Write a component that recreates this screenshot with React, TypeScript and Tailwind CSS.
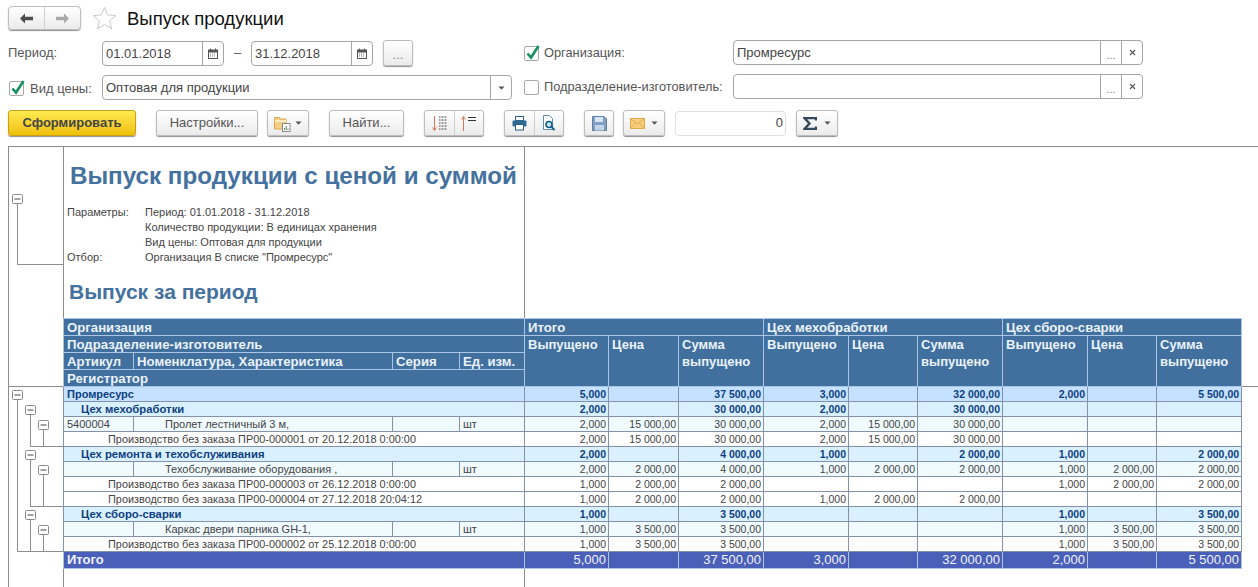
import React from "react";

const FONT = "font-['Liberation_Sans',Arial,sans-serif]";
const BTN = "flex items-center justify-center h-[26px] border border-[#bdbdbd] rounded-[3px] bg-gradient-to-b from-white to-[#ebebeb] shadow-[0_1px_1px_#8f8f8f] text-[#555] text-[13px]";
const FIELD = "flex items-stretch border border-[#a6a6a6] rounded-[4px] bg-white text-[13px] text-[#444]";

function Caret() {
  return <svg width="7" height="4" viewBox="0 0 7 4"><path d="M0.5 0.5h6L3.5 3.7z" fill="#555" /></svg>;
}
function Check({ on }: { on: boolean }) {
  return (
    <span className="relative block w-[15px] h-[15px] border border-[#a8a8a8] rounded-[2px] bg-white shrink-0">
      {on && (
        <svg className="absolute left-[0px] top-[-4px]" width="16" height="18" viewBox="0 0 16 18">
          <path d="M2.5 10.5l3.5 4 7.5-11.5" fill="none" stroke="#17915f" strokeWidth="2.6" />
        </svg>
      )}
    </span>
  );
}
function Cal() {
  return (
    <span className="w-[21px] flex items-center justify-center border-l border-[#a6a6a6]">
      <svg width="10" height="11" viewBox="0 0 10 11">
        <rect x="0.5" y="2" width="9" height="8.5" fill="#fff" stroke="#555" />
        <rect x="0.5" y="2" width="9" height="2.5" fill="#555" />
        <path d="M2.5 0.5v2M7.5 0.5v2" stroke="#555" />
        <path d="M2 6h6M2 8h6" stroke="#777" strokeDasharray="1 1" />
      </svg>
    </span>
  );
}
function Dots() {
  return <span className="w-[21px] flex items-end justify-center border-l border-[#a6a6a6] text-[11px] leading-[18px] text-[#777]">...</span>;
}
function Cross() {
  return (
    <span className="w-[21px] flex items-center justify-center border-l border-[#a6a6a6]">
      <svg width="7" height="7" viewBox="0 0 7 7"><path d="M1 1l5 5M6 1l-5 5" stroke="#555" strokeWidth="1.1" /></svg>
    </span>
  );
}
function OrgField({ value }: { value: string }) {
  return (
    <div className={`${FIELD} h-[25px] self-start w-[410px]`}>
      <span className="flex-1 pl-[3px] leading-[23px]">{value}</span>
      <Dots />
      <Cross />
    </div>
  );
}

type Row = { kind: "org" | "group" | "item" | "reg"; a?: string; n?: string; t: string; v: string[] };
const rows: Row[] = [
  { kind: "org", t: "Промресурс", v: ["5,000", "", "37 500,00", "3,000", "", "32 000,00", "2,000", "", "5 500,00"] },
  { kind: "group", t: "Цех мехобработки", v: ["2,000", "", "30 000,00", "2,000", "", "30 000,00", "", "", ""] },
  { kind: "item", a: "5400004", t: "Пролет лестничный 3 м,", v: ["2,000", "15 000,00", "30 000,00", "2,000", "15 000,00", "30 000,00", "", "", ""] },
  { kind: "reg", t: "Производство без заказа ПР00-000001 от 20.12.2018 0:00:00", v: ["2,000", "15 000,00", "30 000,00", "2,000", "15 000,00", "30 000,00", "", "", ""] },
  { kind: "group", t: "Цех ремонта и техобслуживания", v: ["2,000", "", "4 000,00", "1,000", "", "2 000,00", "1,000", "", "2 000,00"] },
  { kind: "item", t: "Техобслуживание оборудования ,", v: ["2,000", "2 000,00", "4 000,00", "1,000", "2 000,00", "2 000,00", "1,000", "2 000,00", "2 000,00"] },
  { kind: "reg", t: "Производство без заказа ПР00-000003 от 26.12.2018 0:00:00", v: ["1,000", "2 000,00", "2 000,00", "", "", "", "1,000", "2 000,00", "2 000,00"] },
  { kind: "reg", t: "Производство без заказа ПР00-000004 от 27.12.2018 20:04:12", v: ["1,000", "2 000,00", "2 000,00", "1,000", "2 000,00", "2 000,00", "", "", ""] },
  { kind: "group", t: "Цех сборо-сварки", v: ["1,000", "", "3 500,00", "", "", "", "1,000", "", "3 500,00"] },
  { kind: "item", t: "Каркас двери парника GH-1,", v: ["1,000", "3 500,00", "3 500,00", "", "", "", "1,000", "3 500,00", "3 500,00"] },
  { kind: "reg", t: "Производство без заказа ПР00-000002 от 25.12.2018 0:00:00", v: ["1,000", "3 500,00", "3 500,00", "", "", "", "1,000", "3 500,00", "3 500,00"] },
];

const BG: Record<Row["kind"], string> = {
  org: "bg-[#c4e1ff]",
  group: "bg-[#d9f0ff]",
  item: "bg-[#effbff]",
  reg: "bg-white",
};
const TD = "border border-[#8491ab] h-[15px] p-0 leading-[14px] overflow-hidden whitespace-nowrap";
const TH = "border border-[#a9c6e8] p-0 pl-[3px] pt-[2px] text-left align-top text-[13.2px] leading-[14px] font-bold text-[#eaf2fa] overflow-hidden whitespace-nowrap";
const THS = "border border-[#a9c6e8] p-0 pl-[3px] text-left align-top text-[13px] leading-[17px] font-bold text-[#eaf2fa] overflow-hidden whitespace-nowrap";
const WIDTHS = [70, 259, 67, 65, 84, 70, 85, 85, 69, 85, 85, 69, 85];

function Box({ x, y }: { x: number; y: number }) {
  return (
    <g>
      <rect x={x + 0.5} y={y + 0.5} width="10" height="9" rx="1" fill="#fff" stroke="#8a8a8a" />
      <path d={`M${x + 2.5} ${y + 5}h6`} stroke="#444" />
    </g>
  );
}

function Gutter() {
  const lines = "M8.5 57V117.5H54 M0 239.5H54 M8.5 253V404.5H54 M21.5 267V299.5H54 M21.5 312V359.5H54 M21.5 372V404.5 M34.5 282V299.5 M34.5 327V359.5 M34.5 387V404.5";
  return (
    <svg width="54" height="441" viewBox="0 0 54 441" className="block">
      <path d={lines} fill="none" stroke="#8d8d8d" />
      <Box x={3} y={47} />
      <Box x={3} y={243} />
      <Box x={16} y={258} />
      <Box x={29} y={273} />
      <Box x={16} y={303} />
      <Box x={29} y={318} />
      <Box x={16} y={363} />
      <Box x={29} y={378} />
    </svg>
  );
}

export default function App() {
  return (
    <div className={`${FONT} w-[1258px] h-[587px] overflow-hidden bg-white flex flex-col`}>
      {/* Header */}
      <div className="flex items-center h-[24px] mt-[6px] ml-[8px]">
        <div className={`${BTN} !h-[24px] w-[73px] !rounded-[4px]`}>
          <span className="flex-1 flex items-center justify-center h-full border-r border-[#d0d0d0]">
            <svg width="15" height="11" viewBox="0 0 15 11"><path d="M6 0.5L1 5.5l5 5V7.3h8V3.7H6z" fill="#4c4c4c" /></svg>
          </span>
          <span className="flex-1 flex items-center justify-center h-full">
            <svg width="15" height="11" viewBox="0 0 15 11"><path d="M9 0.5l5 5-5 5V7.3H1V3.7h8z" fill="#a8a8a8" /></svg>
          </span>
        </div>
        <svg className="ml-[11px]" width="25" height="24" viewBox="0 0 25 24">
          <path d="M12.5 1.5l3.2 7.4 8 .7-6 5.3 1.8 7.8-7-4.1-7 4.1 1.8-7.8-6-5.3 8-.7z" fill="#fff" stroke="#c9c9c9" />
        </svg>
        <span className="ml-[10px] pt-[1px] text-[18.5px] text-[#111] leading-[24px]">Выпуск продукции</span>
      </div>

      {/* Row 1 */}
      <div className="flex items-center h-[26px] mt-[10px] ml-[8px] text-[13px] text-[#555]">
        <span className="w-[94px]">Период:</span>
        <div className={`${FIELD} h-[25px] self-end w-[122px]`}><span className="flex-1 pl-[3px] leading-[23px]">01.01.2018</span><Cal /></div>
        <span className="w-[27px] text-center">–</span>
        <div className={`${FIELD} h-[25px] self-end w-[122px]`}><span className="flex-1 pl-[3px] leading-[23px]">31.12.2018</span><Cal /></div>
        <div className={`${BTN} w-[30px] ml-[10px] !items-end text-[11px] leading-[20px] !text-[#888]`}>...</div>
        <div className="ml-[111px]"><Check on /></div>
        <span className="ml-[5px] w-[189px] text-[12.8px]">Организация:</span>
        <OrgField value="Промресурс" />
      </div>

      {/* Row 2 */}
      <div className="flex items-center h-[26px] mt-[8px] ml-[8px] text-[13px] text-[#555]">
        <div className="ml-[1px] mt-[3px]"><Check on /></div>
        <span className="ml-[6px] mt-[3px] w-[72px]">Вид цены:</span>
        <div className={`${FIELD} h-[25px] self-end w-[410px]`}>
          <span className="flex-1 pl-[3px] leading-[24px]">Оптовая для продукции</span>
          <span className="w-[21px] flex items-center justify-center border-l border-[#a6a6a6]"><Caret /></span>
        </div>
        <div className="ml-[12px]"><Check on={false} /></div>
        <span className="ml-[5px] w-[189px] whitespace-nowrap text-[12.8px]">Подразделение-изготовитель:</span>
        <OrgField value="" />
      </div>

      {/* Toolbar */}
      <div className="flex items-center h-[26px] mt-[10px] ml-[8px]">
        <div className={`${BTN} w-[128px] !border-[#c9a21a] !from-[#ffea4d] !to-[#f0c000] !text-[#444] font-bold text-[13.2px]`}>Сформировать</div>
        <div className={`${BTN} w-[102px] ml-[20px]`}>Настройки...</div>
        <div className={`${BTN} w-[42px] ml-[9px] gap-[4px]`}>
          <svg width="17" height="17" viewBox="0 0 17 17">
            <path d="M0.5 2.5h5l1 1.5h5.500v10H.5z" fill="#f5cf85" stroke="#dba650" />
            <path d="M1 6h11" stroke="#fbe9c2" strokeWidth="2" />
            <rect x="8.500" y="8.500" width="7.500" height="8" fill="#fff" stroke="#8a8a8a" />
            <path d="M10.500 15v-2M12.200 15v-4M14 15v-1.500" stroke="#5b8a5b" />
          </svg>
          <Caret />
        </div>
        <div className={`${BTN} w-[75px] ml-[20px]`}>Найти...</div>
        <div className={`${BTN} w-[60px] ml-[20px]`}>
          <span className="flex-1 h-full flex items-center justify-center border-r border-[#cfcfcf]">
            <svg width="17" height="17" viewBox="0 0 17 17">
              <path d="M3.500 1v14M1.500 12.500l2 3 2-3" fill="none" stroke="#d9765a" />
              <path d="M8 2h8M8 5h8M8 8h8M8 11h8M8 14h8" stroke="#444" strokeDasharray="1 0.5" />
            </svg>
          </span>
          <span className="flex-1 h-full flex items-center justify-center">
            <svg width="17" height="17" viewBox="0 0 17 17">
              <path d="M3.500 16V2M1.500 4.500l2-3 2 3" fill="none" stroke="#d9765a" />
              <path d="M8 2.500h8M8 5.500h8" stroke="#333" />
            </svg>
          </span>
        </div>
        <div className={`${BTN} w-[60px] ml-[20px]`}>
          <span className="flex-1 h-full flex items-center justify-center border-r border-[#cfcfcf]">
            <svg width="15" height="15" viewBox="0 0 15 15">
              <rect x="3.500" y="0.500" width="8" height="4" fill="#fff" stroke="#2f5f86" />
              <rect x="0.500" y="4.500" width="14" height="6" rx="1" fill="#2f6a96" />
              <rect x="3.500" y="8.500" width="8" height="5.500" fill="#fff" stroke="#2f5f86" />
            </svg>
          </span>
          <span className="flex-1 h-full flex items-center justify-center">
            <svg width="15" height="16" viewBox="0 0 15 16">
              <path d="M2.500 0.500h6l3 3v11h-9z" fill="#fff" stroke="#5f8fae" />
              <circle cx="8" cy="9.500" r="3" fill="#cfe6f2" stroke="#0f5f86" strokeWidth="1.6" />
              <path d="M10 11.500l3.500 3.500" stroke="#0f5f86" strokeWidth="2" />
            </svg>
          </span>
        </div>
        <div className={`${BTN} w-[30px] ml-[20px]`}>
          <svg width="15" height="15" viewBox="0 0 15 15">
            <path d="M0.500 0.500h11.500l2.500 2.500v11.500H.5z" fill="#7f9fc4" stroke="#5f7fa5" />
            <rect x="3" y="1" width="8" height="5" fill="#dbe6f2" />
            <rect x="3" y="9" width="9" height="5.500" fill="#c4d4e6" />
          </svg>
        </div>
        <div className={`${BTN} w-[42px] ml-[9px] gap-[6px]`}>
          <svg width="15" height="11" viewBox="0 0 15 11">
            <rect x="0.500" y="0.500" width="14" height="10" fill="#f7cf7e" stroke="#e0a94c" />
            <path d="M0.500 0.500l7 5.500 7-5.500M0.500 10.500l5-5.500M14.500 10.500l-5-5.500" fill="none" stroke="#e0a94c" />
          </svg>
          <Caret />
        </div>
        <div className="flex items-center justify-end w-[111px] h-[25px] ml-[10px] pr-[2px] border border-[#dedede] rounded-[4px] text-[13px] text-[#444]">0</div>
        <div className={`${BTN} w-[42px] ml-[10px] gap-[7px]`}>
          <svg width="14" height="13" viewBox="0 0 14 13"><path d="M13 3.500V1H1.500l5 5.500-5 5.500H13V9.500" fill="none" stroke="#344a5c" strokeWidth="2.400" /></svg>
          <Caret />
        </div>
      </div>

      {/* Report */}
      <div className="flex flex-1 mt-[10px] ml-[8px] border-t border-l border-[#8d8d8d] min-h-0 overflow-hidden">
        <div className="w-[54px] shrink-0">
          <Gutter />
        </div>
        <div className="flex flex-col flex-1">
          <div className="w-[462px] h-[171px] border-l border-r border-[#8d8d8d] shrink-0 pl-[6px] overflow-hidden whitespace-nowrap">
            <div className="mt-[14px] text-[24.2px] leading-[30px] font-bold text-[#44719e]">Выпуск продукции с ценой и суммой</div>
            <div className="mt-[14px] ml-[-3px] flex text-[11px] leading-[15px] text-[#444]">
              <div className="w-[78px]"><div>Параметры:</div><div className="mt-[30px]">Отбор:</div></div>
              <div>
                <div>Период: 01.01.2018 - 31.12.2018</div>
                <div>Количество продукции: В единицах хранения</div>
                <div>Вид цены: Оптовая для продукции</div>
                <div>Организация В списке "Промресурс"</div>
              </div>
            </div>
            <div className="mt-[15px] ml-[-1px] text-[21px] leading-[24px] font-bold text-[#44719e]">Выпуск за период</div>
          </div>
          <div className="flex shrink-0">
            <table className="table-fixed border-collapse w-[1179px] shrink-0">
              <colgroup>
                {WIDTHS.map((w, i) => <col key={i} style={{ width: w }} />)}
              </colgroup>
              <thead className="bg-[#41709f]">
                <tr className="h-[17px]">
                  <th colSpan={4} className={TH}>Организация</th>
                  <th colSpan={3} className={TH}>Итого</th>
                  <th colSpan={3} className={TH}>Цех мехобработки</th>
                  <th colSpan={3} className={TH}>Цех сборо-сварки</th>
                </tr>
                <tr className="h-[17px]">
                  <th colSpan={4} className={TH}>Подразделение-изготовитель</th>
                  {[0, 1, 2].map((g) => (
                    <React.Fragment key={g}>
                      <th rowSpan={3} className={THS}>Выпущено</th>
                      <th rowSpan={3} className={THS}>Цена</th>
                      <th rowSpan={3} className={THS}>Сумма<br />выпущено</th>
                    </React.Fragment>
                  ))}
                </tr>
                <tr className="h-[17px]">
                  <th className={TH}>Артикул</th>
                  <th className={TH}>Номенклатура, Характеристика</th>
                  <th className={TH}>Серия</th>
                  <th className={TH}>Ед. изм.</th>
                </tr>
                <tr className="h-[17px]">
                  <th colSpan={4} className={TH}>Регистратор</th>
                </tr>
              </thead>
              <tbody>
                {rows.map((r, i) => {
                  const bold = r.kind === "org" || r.kind === "group";
                  const tc = bold ? "font-bold text-[#0f3f7f]" : "text-[#444]";
                  return (
                    <tr key={i} className={`h-[15px] ${BG[r.kind]}`}>
                      {r.kind === "org" && <td colSpan={4} className={`${TD} ${tc} text-[11px] pl-[3px]`}>{r.t}</td>}
                      {r.kind === "group" && <td colSpan={4} className={`${TD} ${tc} text-[11.3px] pl-[17px]`}>{r.t}</td>}
                      {r.kind === "reg" && <td colSpan={4} className={`${TD} ${tc} text-[10.9px] pl-[44px]`}>{r.t}</td>}
                      {r.kind === "item" && (
                        <>
                          <td className={`${TD} ${tc} text-[11px] pl-[3px]`}>{r.a}</td>
                          <td className={`${TD} ${tc} text-[11px] pl-[31px]`}>{r.t}</td>
                          <td className={TD}></td>
                          <td className={`${TD} ${tc} text-[11px] pl-[3px]`}>шт</td>
                        </>
                      )}
                      {r.v.map((v, j) => (
                        <td key={j} className={`${TD} ${tc} text-[10.5px] text-right pr-[2px]`}>{v}</td>
                      ))}
                    </tr>
                  );
                })}
                <tr className="h-[17px] bg-[#4a5fb8]">
                  <td colSpan={4} className="border border-[#a9c6e8] p-0 pl-[3px] text-[13px] leading-[16px] font-bold text-[#eef2fa]">Итого</td>
                  {["5,000", "", "37 500,00", "3,000", "", "32 000,00", "2,000", "", "5 500,00"].map((v, j) => (
                    <td key={j} className="border border-[#a9c6e8] p-0 pr-[2px] text-right text-[13px] leading-[16px] text-[#eef2fa]">{v}</td>
                  ))}
                </tr>
              </tbody>
            </table>
            <div className="flex-1 mt-[68px] h-0 border-t border-[#8d8d8d]"></div>
          </div>
          <div className="w-[462px] flex-1 border-l border-r border-[#8d8d8d]"></div>
        </div>
      </div>
    </div>
  );
}
